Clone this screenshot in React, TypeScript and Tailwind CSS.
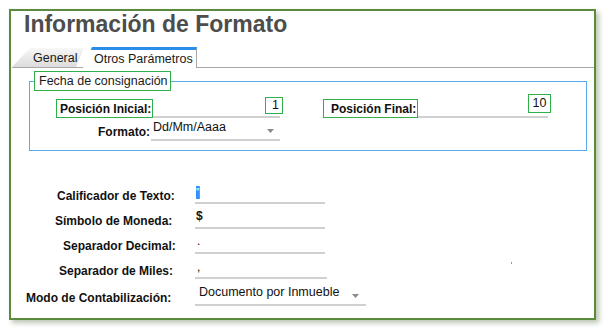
const labelCls = "font-bold text-[12px] leading-[14px] text-[#111] whitespace-nowrap";

function Underline({ w, children }: { w: number; children?: React.ReactNode }) {
  return (
    <div className="flex items-end border-b-2 border-[#d0d0d0] h-[19px]" style={{ width: w }}>
      {children}
    </div>
  );
}

function Arrow() {
  return (
    <svg width="7" height="4" viewBox="0 0 7 4" className="mb-[6px]">
      <path d="M0 0 H7 L3.5 4 Z" fill="#8a8a8a" />
    </svg>
  );
}

export default function App() {
  return (
    <div className="w-[611px] h-[332px] bg-white pt-[9px] pl-[9px] font-['Liberation_Sans',Arial,sans-serif]">
      <div className="relative w-[587px] h-[311px] border-2 border-[#5b8a3c] shadow-[3px_3px_5px_rgba(60,90,40,0.35)]">
        {/* title */}
        <h1 className="pl-[13px] h-[26px] leading-[26px] text-[23px] font-bold text-[#4d4d4d]">
          Información de Formato
        </h1>

        {/* tabs */}
        <div className="mt-[10px] h-[21px] flex items-end border-b border-[#a8a8a8] ml-[1px]">
          <div className="relative h-[19px] w-[72px] bg-gradient-to-b from-[#f7f7f7] to-[#dcdcdc] [clip-path:polygon(18px_0,100%_0,calc(100%-8px)_100%,0_100%)]">
            <span className="absolute left-[21px] top-[3px] text-[12.5px] leading-[15px] text-[#1a1a1a] whitespace-nowrap">General</span>
          </div>
          <div className="relative h-[21px] w-[114px] -ml-[1px] bg-white border-t-[3px] border-t-[#2a8de8] border-r border-r-[#a8a8a8] [clip-path:polygon(9px_0,100%_0,100%_100%,0_100%)] -mb-px">
            <span className="absolute left-[11px] top-[2px] text-[12.5px] leading-[15px] text-[#1a1a1a] whitespace-nowrap">Otros Parámetros</span>
          </div>
        </div>

        {/* fieldset */}
        <div className="relative mt-[13px] ml-[18px] w-[558px] h-[70px] border border-[#5aa8f0]">
          <div className="absolute left-[4px] -top-[11px] h-[20px] w-[137px] pl-[4px] bg-white border border-[#2fb04a] text-[12.5px] leading-[18px] text-[#1a1a1a] whitespace-nowrap">
            Fecha de consignación
          </div>

          <div className="flex items-end pt-[17px]">
            <div className="ml-[26px] h-[19px] w-[97px] border border-[#2fb04a] pl-[3px] flex items-center">
              <span className={labelCls}>Posición Inicial:</span>
            </div>
            <div className="relative">
              <Underline w={127} />
              <span className="absolute left-[112px] -top-[2px] h-[17px] w-[18px] border border-[#2fb04a] text-[12.5px] leading-[15px] text-right pr-[3px] text-[#111]">1</span>
            </div>
            <div className="ml-[43px] h-[19px] w-[95px] border border-[#2fb04a] pl-[7px] flex items-center">
              <span className={labelCls}>Posición Final:</span>
            </div>
            <div className="relative">
              <Underline w={130} />
              <span className="absolute left-[110px] -top-[5px] h-[19px] w-[23px] border border-[#2fb04a] text-[12.5px] leading-[17px] text-center text-[#111]">10</span>
            </div>
          </div>

          <div className="flex items-end mt-[2px]">
            <div className="ml-[68px] mb-[2px] w-[52px] leading-[14px]">
              <span className={labelCls}>Formato:</span>
            </div>
            <div className="ml-[1px] flex items-end justify-between border-b-2 border-[#d0d0d0] w-[129px] h-[21px] pl-[2px] pr-[6px]">
              <span className="text-[12.5px] leading-[18px] mb-[3px] text-[#111]">Dd/Mm/Aaaa</span>
              <Arrow />
            </div>
          </div>
        </div>

        {/* lower section */}
        <div className="mt-[34px] flex flex-col gap-[6px]">
          <div className="flex items-end">
            <div className="w-[184px] pl-[46px] mb-[1px] leading-[14px]"><span className={labelCls}>Calificador de Texto:</span></div>
            <Underline w={130}>
              <span className="mb-[3px] ml-[1px] h-[13px] w-[4px] bg-[#3390ff] border-r border-r-[#f07a20] text-white text-[10px] leading-[13px]">"</span>
            </Underline>
          </div>
          <div className="flex items-end">
            <div className="w-[184px] pl-[44px] mb-[1px] leading-[14px]"><span className={labelCls}>Símbolo de Moneda:</span></div>
            <Underline w={130}>
              <span className="ml-[1px] mb-[4px] text-[12px] leading-[14px] font-bold text-[#111]">$</span>
            </Underline>
          </div>
          <div className="flex items-end">
            <div className="w-[184px] pl-[52px] mb-[1px] leading-[14px]"><span className={labelCls}>Separador Decimal:</span></div>
            <Underline w={130}>
              <span className="ml-[2px] mb-[4px] text-[12px] leading-[14px] text-[#111]">.</span>
            </Underline>
          </div>
          <div className="flex items-end">
            <div className="w-[184px] pl-[48px] mb-[1px] leading-[14px]"><span className={labelCls}>Separador de Miles:</span></div>
            <Underline w={132}>
              <span className="ml-[2px] mb-[3px] text-[12px] leading-[14px] text-[#111]">,</span>
            </Underline>
          </div>
          <div className="flex items-end">
            <div className="w-[184px] pl-[15px] mb-[1px] leading-[14px]"><span className={labelCls}>Modo de Contabilización:</span></div>
            <div className="flex items-end justify-between border-b-2 border-[#d0d0d0] w-[171px] h-[21px] pl-[4px] pr-[7px]">
              <span className="text-[12.5px] leading-[18px] mb-[3px] text-[#111] whitespace-nowrap">Documento por Inmueble</span>
              <Arrow />
            </div>
          </div>
        </div>

        <span className="absolute left-[500px] top-[251px] w-px h-[2px] bg-[#5fbf5f]" />
      </div>
    </div>
  );
}
